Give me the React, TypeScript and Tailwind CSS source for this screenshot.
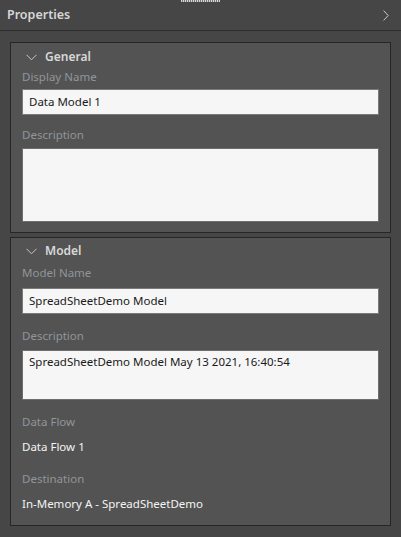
import React from "react";

const font = { fontFamily: '"Segoe UI", "Noto Sans", "Open Sans", sans-serif' };

function ChevronDown() {
  return (
    <svg width="11" height="7" viewBox="0 0 11 7" className="shrink-0">
      <path d="M0.5 0.8 L5.5 5.8 L10.5 0.8" fill="none" stroke="#c8c8c8" strokeWidth="1" />
    </svg>
  );
}

function Label({ children }: { children: React.ReactNode }) {
  return <div className="text-[11.5px] leading-[16px] text-[#90959a]">{children}</div>;
}

export default function App() {
  return (
    <div className="w-[401px] h-[537px] bg-[#464646] relative overflow-hidden" style={font}>
      <div className="absolute left-[181px] top-0 w-[39px] h-[2px] bg-[repeating-linear-gradient(90deg,#d8d8d8_0_1px,#777_1px_2px)]" />
      <div className="h-[31px] border-b border-[#2e2e2e] flex items-center justify-between pl-[7px] pr-[12px]">
        <span className="text-[12.5px] font-semibold text-[#d6d6d6]">Properties</span>
        <svg width="6" height="11" viewBox="0 0 6 11">
          <path d="M0.6 0.6 L5.2 5.5 L0.6 10.4" fill="none" stroke="#c8c8c8" strokeWidth="1" />
        </svg>
      </div>
      <div className="px-[10px] pt-[11px] flex flex-col gap-[4px]">
        <div className="bg-[#535353] border border-[#262626] h-[191px] px-[11px] pt-[4px]">
          <div className="flex items-center gap-[8px] pl-[4px] h-[20px]">
            <ChevronDown />
            <span className="text-[12px] font-semibold text-[#d8d8d8]">General</span>
          </div>
          <div className="mt-[2px]"><Label>Display Name</Label></div>
          <div className="mt-[4px] h-[26px] bg-[#f6f6f6] border border-[#7a7a7a] flex items-center px-[6px] text-[11.5px] text-[#1a1a1a]">Data Model 1</div>
          <div className="mt-[12px]"><Label>Description</Label></div>
          <div className="mt-[5px] h-[74px] bg-[#f6f6f6] border border-[#6e6e6e]" />
        </div>
        <div className="bg-[#535353] border border-[#262626] h-[289px] px-[11px] pt-[3px]">
          <div className="flex items-center gap-[8px] pl-[4px] h-[20px]">
            <ChevronDown />
            <span className="text-[12px] font-semibold text-[#d8d8d8]">Model</span>
          </div>
          <div className="mt-[4px]"><Label>Model Name</Label></div>
          <div className="mt-[7px] h-[26px] bg-[#f6f6f6] border border-[#7a7a7a] flex items-center px-[6px] text-[11.5px] text-[#1a1a1a]">SpreadSheetDemo Model</div>
          <div className="mt-[14px]"><Label>Description</Label></div>
          <div className="mt-[6px] h-[50px] bg-[#f6f6f6] border border-[#6e6e6e] px-[6px] pt-[2px] text-[11.5px] text-[#1a1a1a]">SpreadSheetDemo Model May 13 2021, 16:40:54</div>
          <div className="mt-[14px]"><Label>Data Flow</Label></div>
          <div className="mt-[9px] text-[11.5px] leading-[16px] text-[#f4f4f4]">Data Flow 1</div>
          <div className="mt-[16px]"><Label>Destination</Label></div>
          <div className="mt-[9px] text-[11.5px] leading-[16px] text-[#f4f4f4]">In-Memory A - SpreadSheetDemo</div>
        </div>
      </div>
    </div>
  );
}
